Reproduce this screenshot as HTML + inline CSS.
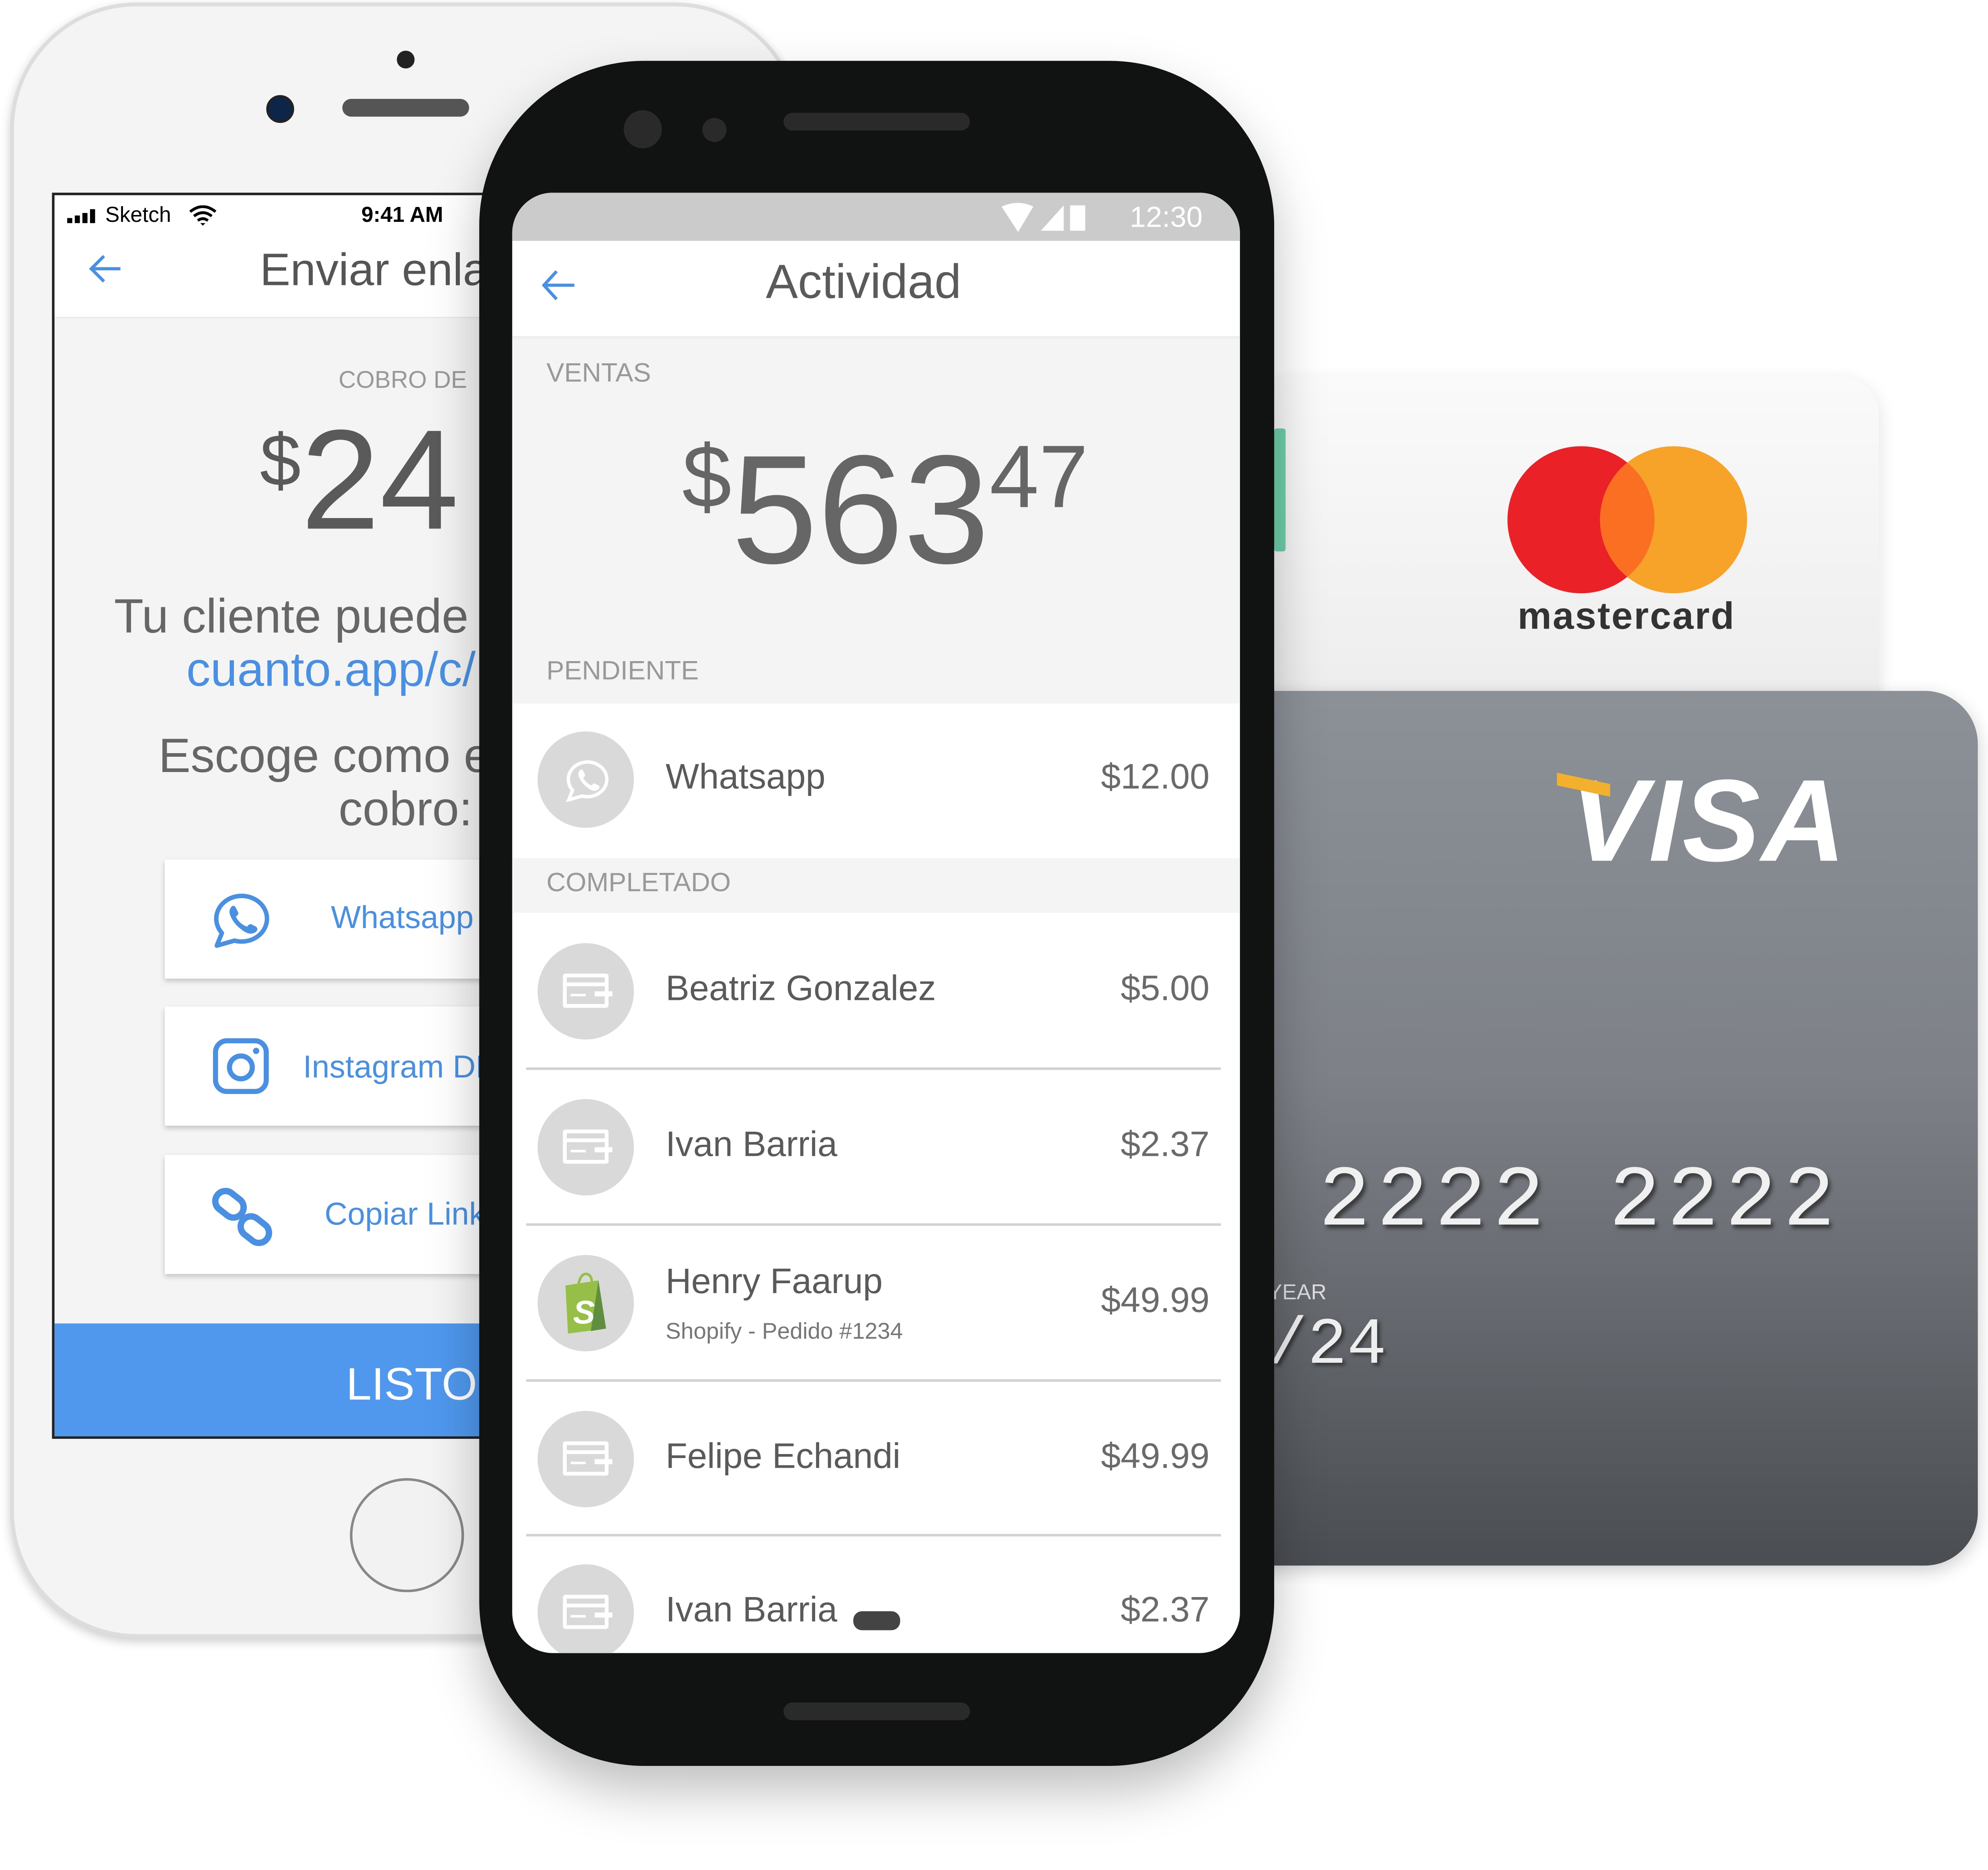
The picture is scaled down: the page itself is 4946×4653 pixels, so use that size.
<!DOCTYPE html>
<html><head><meta charset="utf-8"><style>
html,body{margin:0;padding:0;background:#fff;}
body{width:4946px;height:4652px;overflow:hidden;position:relative;font-family:"Liberation Sans",sans-serif;}
#w{position:absolute;left:0;top:0;width:1568px;height:1475px;transform:scale(3.1543);transform-origin:0 0;}
.a{position:absolute;}
.t{position:absolute;white-space:nowrap;}
.ic{position:absolute;left:424px;width:76px;height:76px;border-radius:50%;background:#d9d9d9;}
.cd{position:absolute;left:20px;top:24px;width:36px;height:27px;border:3px solid #fff;box-sizing:border-box;border-radius:2px;}
.cd:before{content:"";position:absolute;left:0;right:0;top:4px;height:3px;background:#fff;}
.cd:after{content:"";position:absolute;left:3px;top:13px;width:12px;height:2px;background:#fff;box-shadow:20px -1px 0 1px #fff;}
.nm{position:absolute;left:525px;font-size:28px;color:#5a5a5a;}
.pr{position:absolute;right:614px;font-size:28px;color:#6a6a6a;}
.dv{position:absolute;left:415px;width:548px;height:2px;background:#d2d2d2;}
</style></head><body><div id="w">

<!-- mastercard card -->
<div class="a" style="left:990px;top:297px;width:492px;height:280px;border-radius:30px;background:linear-gradient(#fafafa,#ececec);box-shadow:0 4px 14px rgba(0,0,0,.12);"></div>
<div class="a" style="left:1189px;top:352px;width:116px;height:116px;border-radius:50%;background:#eb2128;"></div>
<div class="a" style="left:1262px;top:352px;width:116px;height:116px;border-radius:50%;background:#f7a329;"></div>
<div class="a" style="left:1262px;top:352px;width:116px;height:116px;border-radius:50%;overflow:hidden;"><div style="position:absolute;left:-73px;top:0;width:116px;height:116px;border-radius:50%;background:#fb6f22;"></div></div>
<div class="t" style="left:1197px;top:470px;font-size:30px;font-weight:bold;color:#333;letter-spacing:1px;">mastercard</div>
<div class="a" style="left:1005px;top:338px;width:9px;height:97px;background:#6fcfa9;border-radius:2px;"></div>

<!-- visa card -->
<div class="a" style="left:960px;top:545px;width:600px;height:690px;border-radius:42px;background:linear-gradient(#8c9198 0%,#7d8187 45%,#4a4d52 100%);box-shadow:0 4px 14px rgba(0,0,0,.2);"></div>
<div class="t" style="left:1238px;top:596px;font-size:92px;font-weight:bold;font-style:italic;color:#fff;letter-spacing:1px;">VISA</div>
<div class="a" style="left:1228px;top:614px;width:42px;height:10px;background:#f3b02d;transform:skewY(12deg);"></div>
<div class="t" style="left:1040px;top:910px;font-size:68px;font-family:'Liberation Mono',monospace;color:#f0f0f0;letter-spacing:5px;text-shadow:2px 3px 3px rgba(0,0,0,.5);">2222 2222</div>
<div class="t" style="left:1000px;top:1010px;font-size:17px;color:#ddd;">YEAR</div>
<div class="t" style="left:1000px;top:1032px;font-size:52px;font-family:'Liberation Mono',monospace;color:#eee;text-shadow:2px 2px 3px rgba(0,0,0,.5);">/24</div>

<!-- iPhone -->
<div class="a" style="left:8px;top:2px;width:624px;height:1290px;border-radius:100px;background:#f4f4f4;border:3px solid #ddd;box-sizing:border-box;box-shadow:0 3px 8px rgba(0,0,0,.2);"></div>
<div class="a" style="left:313px;top:40px;width:14px;height:14px;border-radius:50%;background:#222;"></div>
<div class="a" style="left:210px;top:75px;width:18px;height:18px;border-radius:50%;background:#0d2548;border:2px solid #222;"></div>
<div class="a" style="left:270px;top:78px;width:100px;height:14px;border-radius:7px;background:#555;"></div>
<div class="a" style="left:41px;top:152px;width:400px;height:983px;background:#f4f4f4;border:2px solid #222;box-sizing:border-box;overflow:hidden;">
 <div class="a" style="left:0;top:0;width:100%;height:96px;background:#fff;border-bottom:1px solid #e8e8e8;"></div>
 <div class="a" style="left:10px;top:11px;width:22px;height:11px;"><div style="position:absolute;left:0;bottom:0;width:4px;height:4px;background:#000"></div><div style="position:absolute;left:6px;bottom:0;width:4px;height:6px;background:#000"></div><div style="position:absolute;left:12px;bottom:0;width:4px;height:8px;background:#000"></div><div style="position:absolute;left:18px;bottom:0;width:4px;height:11px;background:#000"></div></div>
 <div class="t" style="left:40px;top:6px;font-size:17px;color:#000;">Sketch</div>
 <svg class="a" style="left:106px;top:8px" width="22" height="16" viewBox="0 0 22 16"><path d="M1 5 Q11 -3 21 5 M4 8.5 Q11 3 18 8.5 M7 12 Q11 9 15 12" fill="none" stroke="#000" stroke-width="2.2"/><path d="M9 14 L11 16 L13 14 Z" fill="#000"/></svg>
 <div class="t" style="left:242px;top:6px;font-size:17px;font-weight:bold;color:#000;">9:41 AM</div>
 <svg class="a" style="left:26px;top:46px" width="28" height="24" viewBox="0 0 28 24"><path d="M26 12 H3 M13 2 L3 12 L13 22" fill="none" stroke="#4a90e2" stroke-width="2.5"/></svg>
 <div class="t" style="left:162px;top:38px;font-size:36px;color:#555;">Enviar enlace</div>
 <div class="t" style="left:224px;top:136px;font-size:19px;color:#999;">COBRO DE</div>
 <div class="t" style="left:162px;top:160px;font-size:112px;color:#5a5a5a;"><span style="font-size:58px;vertical-align:34px;">$</span>24</div>
 <div class="t" style="left:47px;top:312px;font-size:38px;color:#666;">Tu cliente puede</div>
 <div class="t" style="left:104px;top:354px;font-size:38px;color:#4a90e2;">cuanto.app/c/</div>
 <div class="t" style="left:82px;top:422px;font-size:38px;color:#666;">Escoge como el</div>
 <div class="t" style="left:224px;top:464px;font-size:38px;color:#666;">cobro:</div>
 <div class="a" style="left:87px;top:524px;width:320px;height:94px;background:#fff;box-shadow:0 2px 4px rgba(0,0,0,.2);"></div>
 <div class="a" style="left:87px;top:640px;width:320px;height:94px;background:#fff;box-shadow:0 2px 4px rgba(0,0,0,.2);"></div>
 <div class="a" style="left:87px;top:757px;width:320px;height:94px;background:#fff;box-shadow:0 2px 4px rgba(0,0,0,.2);"></div>
 <svg class="a" style="left:122px;top:546px" width="50" height="50" viewBox="0 0 50 50"><path d="M6 46 L10 36 A20 18 0 1 1 20 42 Z" fill="none" stroke="#4a90e2" stroke-width="3.5" stroke-linejoin="round"/><path d="M17 16 q2-3 4 0 l2 4 q0 2-2 3 q3 6 9 8 q1-2 3-2 l4 2 q2 2 0 4 q-4 3-9 0 q-8-5-11-12 q-2-4 0-7z" fill="#4a90e2"/></svg>
 <div class="t" style="left:218px;top:556px;font-size:25px;color:#4a90e2;">Whatsapp</div>
 <svg class="a" style="left:124px;top:664px" width="46" height="46" viewBox="0 0 46 46"><rect x="3" y="3" width="40" height="40" rx="9" fill="none" stroke="#4a90e2" stroke-width="4"/><circle cx="23" cy="24" r="9" fill="none" stroke="#4a90e2" stroke-width="4"/><circle cx="35" cy="11" r="2.5" fill="#4a90e2"/></svg>
 <div class="t" style="left:196px;top:674px;font-size:25px;color:#4a90e2;">Instagram DM</div>
 <svg class="a" style="left:124px;top:780px" width="52" height="52" viewBox="0 0 52 52"><rect x="2" y="8" width="24" height="16" rx="8" transform="rotate(38 14 16)" fill="none" stroke="#4a90e2" stroke-width="5"/><rect x="22" y="28" width="24" height="16" rx="8" transform="rotate(38 34 36)" fill="none" stroke="#4a90e2" stroke-width="5"/></svg>
 <div class="t" style="left:213px;top:790px;font-size:25px;color:#4a90e2;">Copiar Link</div>
 <div class="a" style="left:0;top:890px;width:100%;height:93px;background:#4f98ee;"></div>
 <div class="t" style="left:230px;top:917px;font-size:36px;color:#fff;">LISTO</div>
</div>
<div class="a" style="left:276px;top:1166px;width:86px;height:86px;border-radius:50%;border:2px solid #888;background:#f2f2f2;"></div>

<!-- Android -->
<div class="a" style="left:378px;top:48px;width:627px;height:1345px;border-radius:130px;background:#111312;box-shadow:0 20px 50px rgba(0,0,0,.25);"></div>
<div class="a" style="left:492px;top:87px;width:30px;height:30px;border-radius:50%;background:#2a2a2a;"></div>
<div class="a" style="left:554px;top:93px;width:19px;height:19px;border-radius:50%;background:#2a2a2a;"></div>
<div class="a" style="left:618px;top:89px;width:147px;height:14px;border-radius:7px;background:#2a2a2a;"></div>
<div class="a" style="left:618px;top:1343px;width:147px;height:14px;border-radius:7px;background:#2a2a2a;"></div>
<div class="a" style="left:404px;top:152px;width:574px;height:1152px;border-radius:32px;background:#fff;overflow:hidden;">
 <div class="a" style="left:0;top:0;width:100%;height:38px;background:#cbcbcb;"></div>
 <svg class="a" style="left:385px;top:8px" width="70" height="24" viewBox="0 0 70 24"><path d="M1 3 Q14 -3 26 3 L14 23 Z" fill="#fff"/><path d="M32 22 L50 2 L50 22 Z" fill="#fff"/><rect x="55" y="2" width="12" height="20" fill="#fff"/></svg>
 <div class="t" style="left:487px;top:6px;font-size:23px;color:#fff;">12:30</div>
 <svg class="a" style="left:22px;top:60px" width="28" height="26" viewBox="0 0 28 26"><path d="M27 13 H3 M13 2 L3 13 L13 24" fill="none" stroke="#4a90e2" stroke-width="2.5"/></svg>
 <div class="t" style="left:200px;top:50px;font-size:38px;color:#5a5a5a;">Actividad</div>
 <div class="a" style="left:0;top:113px;width:100%;height:288px;background:#f4f4f4;border-top:2px solid #eee;"></div>
 <div class="t" style="left:27px;top:131px;font-size:21px;color:#999;">VENTAS</div>
 <div class="t" style="left:134px;top:180px;font-size:122px;color:#666;"><span style="font-size:70px;vertical-align:44px;">$</span>563<span style="font-size:70px;vertical-align:44px;">47</span></div>
 <div class="t" style="left:27px;top:366px;font-size:21px;color:#999;">PENDIENTE</div>
 <div class="a" style="left:0;top:525px;width:100%;height:43px;background:#f4f4f4;"></div>
 <div class="t" style="left:27px;top:533px;font-size:21px;color:#999;">COMPLETADO</div>
</div>
<!-- rows -->
<div class="ic" style="top:577px;"><svg style="position:absolute;left:20px;top:18px" width="38" height="40" viewBox="0 0 50 50"><path d="M6 46 L10 36 A20 18 0 1 1 20 42 Z" fill="none" stroke="#fff" stroke-width="3.5"/><path d="M17 16 q2-3 4 0 l2 4 q0 2-2 3 q3 6 9 8 q1-2 3-2 l4 2 q2 2 0 4 q-4 3-9 0 q-8-5-11-12 q-2-4 0-7z" fill="#fff"/></svg></div>
<div class="nm" style="top:597px;">Whatsapp</div><div class="pr" style="top:597px;">$12.00</div>
<div class="ic" style="top:744px;"><div class="cd"></div></div>
<div class="nm" style="top:764px;">Beatriz Gonzalez</div><div class="pr" style="top:764px;">$5.00</div>
<div class="dv" style="top:842px;"></div>
<div class="ic" style="top:867px;"><div class="cd"></div></div>
<div class="nm" style="top:887px;">Ivan Barria</div><div class="pr" style="top:887px;">$2.37</div>
<div class="dv" style="top:965px;"></div>
<div class="ic" style="top:990px;"><svg style="position:absolute;left:18px;top:12px" width="40" height="52" viewBox="0 0 40 52"><path d="M4 12 L30 8 L36 46 L6 50 Z" fill="#95bf47"/><path d="M30 8 L36 46 L24 48 Z" fill="#5e8e3e"/><path d="M14 12 q2-10 7-9 q4 1 4 8" fill="none" stroke="#95bf47" stroke-width="2"/><text x="10" y="42" font-size="26" font-weight="bold" font-style="italic" fill="#fff" font-family="Liberation Sans">S</text></svg></div>
<div class="nm" style="top:995px;">Henry Faarup</div>
<div class="t" style="left:525px;top:1040px;font-size:18px;color:#777;">Shopify - Pedido #1234</div>
<div class="pr" style="top:1010px;">$49.99</div>
<div class="dv" style="top:1088px;"></div>
<div class="ic" style="top:1113px;"><div class="cd"></div></div>
<div class="nm" style="top:1133px;">Felipe Echandi</div><div class="pr" style="top:1133px;">$49.99</div>
<div class="dv" style="top:1210px;"></div>
<div class="a" style="left:404px;top:1212px;width:574px;height:92px;overflow:hidden;border-radius:0 0 32px 32px;">
 <div class="ic" style="left:20px;top:22px;"><div class="cd"></div></div>
 <div class="nm" style="left:121px;top:42px;">Ivan Barria</div><div class="pr" style="right:24px;top:42px;">$2.37</div>
 <div class="a" style="left:269px;top:59px;width:37px;height:15px;border-radius:7px;background:#444;"></div>
</div>
</div></body></html>
